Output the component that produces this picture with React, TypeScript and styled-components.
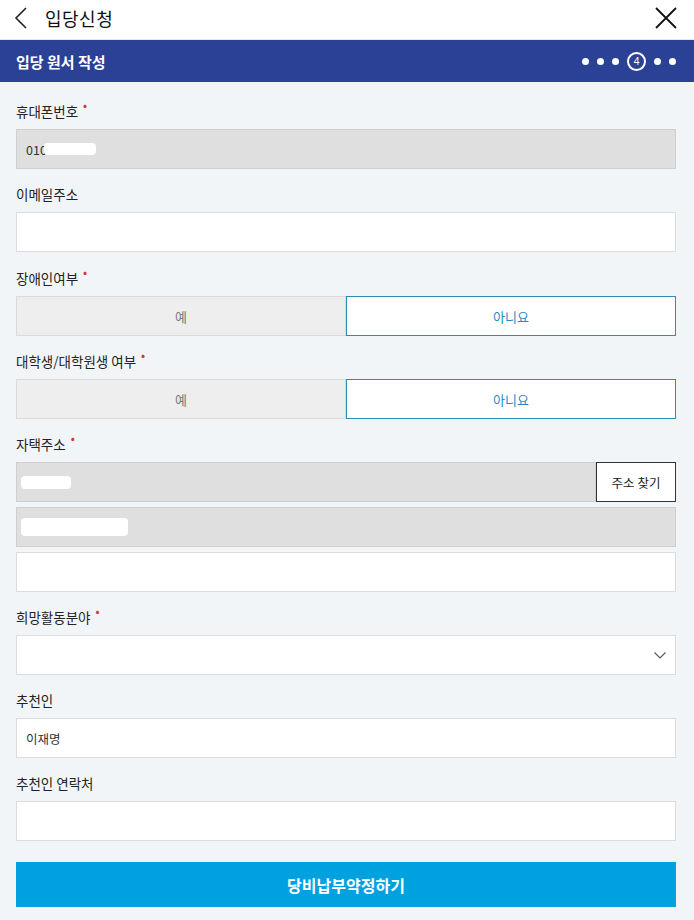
import React from "react";
import styled, { createGlobalStyle } from "styled-components";

const Global = createGlobalStyle`
  html, body { margin: 0; padding: 0; background: #f2f5f8; }
  body { font-family: "Noto Sans CJK KR", "Noto Sans", sans-serif; color: #222; }
  * { box-sizing: border-box; }
`;

const Page = styled.div`
  width: 694px;
  min-height: 920px;
  background: #f2f5f8;
`;

const TopBar = styled.header`
  height: 40px;
  background: #fff;
  display: flex;
  align-items: center;
  padding: 0 17px 3px 14px;
  border-bottom: 1px solid #e3e6ea;
`;

const IconButton = styled.span`
  display: flex;
  align-items: center;
  justify-content: center;
`;

const PageTitle = styled.h1`
  margin: 0 0 0 17px;
  font-size: 18px;
  font-weight: 400;
  color: #111;
  flex: 1;
  letter-spacing: 0.5px;
`;

const StepBar = styled.div`
  height: 42px;
  background: #2b4195;
  display: flex;
  align-items: center;
  justify-content: space-between;
  padding: 0 18px 0 16px;
`;

const StepTitle = styled.h2`
  margin: 0;
  font-size: 15px;
  font-weight: 700;
  color: #fff;
`;

const Steps = styled.div`
  display: flex;
  align-items: center;
  gap: 8px;
`;

const Dot = styled.span`
  width: 7px;
  height: 7px;
  border-radius: 50%;
  background: #fff;
`;

const CurrentStep = styled.span`
  width: 19px;
  height: 19px;
  border-radius: 50%;
  border: 2px solid #fff;
  color: #fff;
  font-size: 10px;
  display: flex;
  align-items: center;
  justify-content: center;
  font-family: "Noto Sans", sans-serif;
  line-height: 1;
`;

const Form = styled.form`
  padding: 4px 18px 13px 16px;
  display: flex;
  flex-direction: column;
`;

const Group = styled.div<{ $top?: number }>`
  padding-top: ${(p) => p.$top ?? 15}px;
  display: flex;
  flex-direction: column;
`;

const Label = styled.label`
  font-size: 13.5px;
  line-height: 20px;
  height: 20px;
  margin-bottom: 8px;
  color: #222;
  display: flex;
  align-items: flex-start;
`;

const Req = styled.span`
  color: #d8333a;
  font-size: 12px;
  line-height: 12px;
  margin-left: 5px;
  margin-top: -2px;
`;

const Stack = styled.div`
  display: flex;
  flex-direction: column;
  gap: 5px;
`;

const Field = styled.div<{ $disabled?: boolean; $grow?: boolean }>`
  height: 40px;
  flex: ${(p) => (p.$grow ? "1 1 auto" : "0 0 40px")};
  border: 1px solid ${(p) => (p.$disabled ? "#cfcfcf" : "#dadce0")};
  background: ${(p) => (p.$disabled ? "#dfdfdf" : "#fff")};
  display: flex;
  align-items: center;
  padding: 0 9px;
  font-size: 12.5px;
  color: #333;
  position: relative;
`;

const Blot = styled.span<{ $w: number; $h: number }>`
  display: inline-block;
  width: ${(p) => p.$w}px;
  height: ${(p) => p.$h}px;
  background: #fff;
  border-radius: 4px;
`;

const Row = styled.div`
  display: flex;
`;

const Toggle = styled.button<{ $active?: boolean }>`
  flex: 1;
  height: 40px;
  font-family: inherit;
  font-size: 13px;
  background: ${(p) => (p.$active ? "#fff" : "#eeeeee")};
  border: 1px solid ${(p) => (p.$active ? "#2a8db5" : "#dadada")};
  color: ${(p) => (p.$active ? "#1f8cc4" : "#777")};
  padding: 0;
`;

const FindButton = styled.button`
  width: 80px;
  flex: 0 0 80px;
  height: 40px;
  background: #fff;
  border: 1px solid #333;
  font-family: inherit;
  font-size: 12.5px;
  color: #222;
  padding: 0;
`;

const Chevron = styled.span`
  position: absolute;
  right: 8px;
  top: 12px;
  display: flex;
`;

const Submit = styled.button`
  margin-top: 21px;
  height: 45px;
  background: #00a1df;
  border: none;
  color: #fff;
  font-family: inherit;
  font-size: 16px;
  font-weight: 700;
`;

const Phone = styled.span`
  display: flex;
  align-items: center;
`;

export default function App() {
  return (
    <Page>
      <Global />
      <TopBar>
        <IconButton>
          <svg width="14" height="24" viewBox="0 0 14 24">
            <path d="M12 2 L2 12 L12 22" fill="none" stroke="#222" strokeWidth="1.6" />
          </svg>
        </IconButton>
        <PageTitle>입당신청</PageTitle>
        <IconButton>
          <svg width="22" height="22" viewBox="0 0 22 22">
            <path d="M1 1 L21 21 M21 1 L1 21" fill="none" stroke="#111" strokeWidth="1.8" />
          </svg>
        </IconButton>
      </TopBar>
      <StepBar>
        <StepTitle>입당 원서 작성</StepTitle>
        <Steps>
          <Dot />
          <Dot />
          <Dot />
          <CurrentStep>4</CurrentStep>
          <Dot />
          <Dot />
        </Steps>
      </StepBar>
      <Form>
        <Group>
          <Label>
            휴대폰번호<Req>•</Req>
          </Label>
          <Field $disabled>
            <Phone>
              010
              <Blot $w={52} $h={12} style={{ marginLeft: -3 }} />
            </Phone>
          </Field>
        </Group>
        <Group>
          <Label>이메일주소</Label>
          <Field />
        </Group>
        <Group $top={16}>
          <Label>
            장애인여부<Req>•</Req>
          </Label>
          <Row>
            <Toggle type="button">예</Toggle>
            <Toggle type="button" $active>
              아니요
            </Toggle>
          </Row>
        </Group>
        <Group>
          <Label>
            대학생/대학원생 여부<Req>•</Req>
          </Label>
          <Row>
            <Toggle type="button">예</Toggle>
            <Toggle type="button" $active>
              아니요
            </Toggle>
          </Row>
        </Group>
        <Group>
          <Label>
            자택주소<Req>•</Req>
          </Label>
          <Stack>
            <Row>
              <Field $disabled $grow style={{ paddingLeft: 4 }}>
                <Blot $w={50} $h={13} />
              </Field>
              <FindButton type="button">주소 찾기</FindButton>
            </Row>
            <Field $disabled style={{ paddingLeft: 4 }}>
              <Blot $w={107} $h={18} />
            </Field>
            <Field />
          </Stack>
        </Group>
        <Group>
          <Label>
            희망활동분야<Req>•</Req>
          </Label>
          <Field>
            <Chevron>
              <svg width="14" height="14" viewBox="0 0 14 14">
                <path d="M1.5 4.5 L7 10 L12.5 4.5" fill="none" stroke="#555" strokeWidth="1.1" />
              </svg>
            </Chevron>
          </Field>
        </Group>
        <Group>
          <Label>추천인</Label>
          <Field>이재명</Field>
        </Group>
        <Group>
          <Label>추천인 연락처</Label>
          <Field />
        </Group>
        <Submit type="button">당비납부약정하기</Submit>
      </Form>
    </Page>
  );
}
